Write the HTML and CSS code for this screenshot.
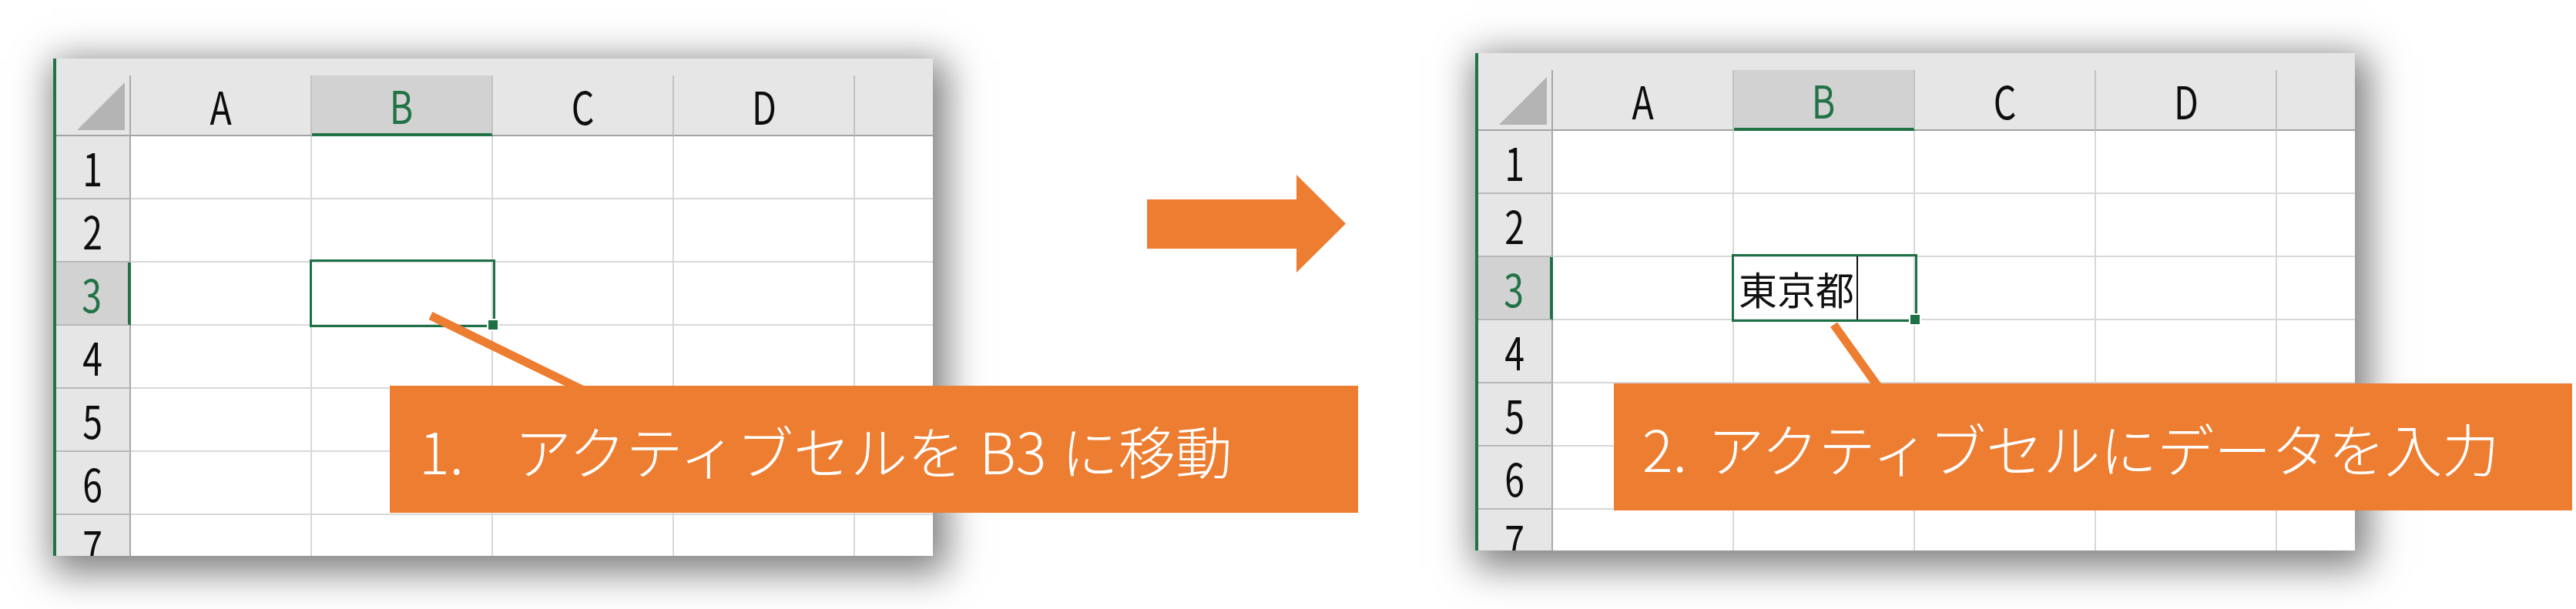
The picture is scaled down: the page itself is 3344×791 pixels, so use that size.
FILE: index.html
```html
<!DOCTYPE html>
<html lang="ja">
<head>
<meta charset="utf-8">
<title>アクティブセルにデータを入力</title>
<link rel="stylesheet" href="styles.css">
</head>
<body>
<div class="slide">
  <section class="panel panel-one">
    <div class="sheet">
      <div class="edge"></div>
      <div class="grid">
        <div class="strip"></div>
        <div class="corner"><span class="tri"></span></div>
        <div class="ch"><span>A</span></div>
        <div class="ch ch-sel"><span>B</span></div>
        <div class="ch"><span>C</span></div>
        <div class="ch"><span>D</span></div>
        <div class="ch ch-last"></div>

        <div class="rh"><span>1</span></div><div class="c"></div><div class="c"></div><div class="c"></div><div class="c"></div><div class="c c-last"></div>
        <div class="rh"><span>2</span></div><div class="c"></div><div class="c"></div><div class="c"></div><div class="c"></div><div class="c c-last"></div>
        <div class="rh rh-sel"><span>3</span></div><div class="c"></div><div class="c active"><div class="selection"><span class="handle"></span></div></div><div class="c"></div><div class="c"></div><div class="c c-last"></div>
        <div class="rh"><span>4</span></div><div class="c"></div><div class="c"></div><div class="c"></div><div class="c"></div><div class="c c-last"></div>
        <div class="rh"><span>5</span></div><div class="c"></div><div class="c"></div><div class="c"></div><div class="c"></div><div class="c c-last"></div>
        <div class="rh"><span>6</span></div><div class="c"></div><div class="c"></div><div class="c"></div><div class="c"></div><div class="c c-last"></div>
        <div class="rh rh-cut"><span>7</span></div><div class="c"></div><div class="c"></div><div class="c"></div><div class="c"></div><div class="c c-last"></div>
      </div>
    </div>
    <svg class="leader" width="1142" height="646" viewBox="0 0 1142 646">
      <line x1="490" y1="334" x2="736" y2="454" stroke="#ED7D31" stroke-width="11"/>
    </svg>
    <div class="callout callout-one"><span class="num">1.</span><span>アクティブセルを B3 に移動</span></div>
  </section>

  <svg class="arrow" width="258" height="127" viewBox="0 0 258 127">
    <polygon points="0,32 194,32 194,0 258,63.5 194,127 194,96 0,96" fill="#ED7D31"/>
  </svg>

  <section class="panel panel-two">
    <div class="sheet">
      <div class="edge"></div>
      <div class="grid">
        <div class="strip"></div>
        <div class="corner"><span class="tri"></span></div>
        <div class="ch"><span>A</span></div>
        <div class="ch ch-sel"><span>B</span></div>
        <div class="ch"><span>C</span></div>
        <div class="ch"><span>D</span></div>
        <div class="ch ch-last"></div>

        <div class="rh"><span>1</span></div><div class="c"></div><div class="c"></div><div class="c"></div><div class="c"></div><div class="c c-last"></div>
        <div class="rh"><span>2</span></div><div class="c"></div><div class="c"></div><div class="c"></div><div class="c"></div><div class="c c-last"></div>
        <div class="rh rh-sel"><span>3</span></div><div class="c"></div><div class="c active"><div class="selection editing"><span class="value">東京都</span><span class="caret"></span><span class="handle"></span></div></div><div class="c"></div><div class="c"></div><div class="c c-last"></div>
        <div class="rh"><span>4</span></div><div class="c"></div><div class="c"></div><div class="c"></div><div class="c"></div><div class="c c-last"></div>
        <div class="rh"><span>5</span></div><div class="c"></div><div class="c"></div><div class="c"></div><div class="c"></div><div class="c c-last"></div>
        <div class="rh"><span>6</span></div><div class="c"></div><div class="c"></div><div class="c"></div><div class="c"></div><div class="c c-last"></div>
        <div class="rh rh-cut"><span>7</span></div><div class="c"></div><div class="c"></div><div class="c"></div><div class="c"></div><div class="c c-last"></div>
      </div>
    </div>
    <svg class="leader" width="1142" height="646" viewBox="0 0 1142 646">
      <line x1="465.5" y1="352.6" x2="543" y2="461" stroke="#ED7D31" stroke-width="11"/>
    </svg>
    <div class="callout callout-two">2. アクティブセルにデータを入力</div>
  </section>
</div>
</body>
</html>
```

FILE: styles.css
```css
* { box-sizing: border-box; }

html, body {
  margin: 0;
  padding: 0;
  background: #ffffff;
}

body {
  width: 3344px;
  height: 791px;
  overflow: hidden;
  font-family: "Noto Sans CJK JP", "Noto Sans", sans-serif;
}

.slide {
  display: flex;
  align-items: flex-start;
  padding-left: 69px;
}

.panel {
  position: relative;
  width: 1142px;
  height: 646px;
  flex: none;
}

.panel-one { margin-top: 76px; }
.panel-two { margin-top: 69px; margin-left: 168px; }

.arrow {
  flex: none;
  margin-left: 278px;
  margin-top: 227px;
  display: block;
}

.sheet {
  display: flex;
  width: 1142px;
  height: 646px;
  overflow: hidden;
  background: #ffffff;
  box-shadow: 8px 12px 46px 10px rgba(0, 0, 0, 0.5);
}

.edge {
  width: 4px;
  flex: none;
  background: #217346;
}

.grid {
  flex: 1;
  display: grid;
  grid-template-columns: 97px repeat(4, 235px) 1fr;
  grid-template-rows: 22px 79px repeat(6, 82px) 1fr;
}

.strip {
  grid-column: 1 / -1;
  background: #e6e6e6;
}

.corner {
  position: relative;
  background: #e6e6e6;
  border-right: 2px solid #a9a9a9;
  border-bottom: 2px solid #a3a3a3;
}

.tri {
  position: absolute;
  right: 6px;
  bottom: 6px;
  width: 62px;
  height: 62px;
  background: #b4b4b4;
  clip-path: polygon(100% 0, 100% 100%, 0 100%);
}

.ch, .rh {
  display: flex;
  align-items: center;
  justify-content: center;
  background: #e6e6e6;
  color: #0d0d0d;
  font-size: 58px;
  font-weight: 400;
  line-height: 1;
}

.ch span, .rh span {
  display: inline-block;
  transform: scaleX(0.8);
}

.rh-cut { align-items: flex-start; padding-top: 10px; }

.ch {
  border-right: 2px solid #c2c2c2;
  border-bottom: 2px solid #a3a3a3;
}

.ch-last { border-right: 0; }

.ch-sel {
  background: #d2d2d2;
  color: #217346;
  border-bottom: 4px solid #217346;
}

.rh {
  border-right: 2px solid #a9a9a9;
  border-bottom: 2px solid #b8b8b8;
}

.rh-sel {
  background: #d2d2d2;
  color: #217346;
  border-right: 4px solid #217346;
}

.c {
  border-right: 2px solid #d8d8d8;
  border-bottom: 2px solid #d8d8d8;
}

.c-last { border-right: 0; }

.active { position: relative; }

.selection {
  position: absolute;
  top: -4px;
  left: -3px;
  right: -5px;
  bottom: -4px;
  border: 3px solid #1e7145;
  display: flex;
  align-items: center;
  z-index: 1;
}

.handle {
  position: absolute;
  right: -8px;
  bottom: -8px;
  width: 16px;
  height: 16px;
  background: #1e7145;
  border: 2px solid #ffffff;
}

.editing {
  padding-left: 6px;
}

.value {
  font-size: 50px;
  font-weight: 400;
  color: #111111;
  line-height: 1;
}

.caret {
  align-self: stretch;
  width: 2px;
  margin-left: 3px;
  background: #111111;
}

.leader {
  position: absolute;
  left: 0;
  top: 0;
  overflow: visible;
  z-index: 2;
}

.callout {
  position: absolute;
  z-index: 3;
  height: 165px;
  display: flex;
  align-items: center;
  background: #ED7D31;
  color: #ffffff;
  font-size: 74px;
  font-weight: 300;
  line-height: 1;
  white-space: pre;
  word-spacing: 10px;
}

.callout-one {
  left: 437px;
  top: 425px;
  width: 1257px;
  padding-left: 38px;
  word-spacing: 3px;
}

.num {
  margin-right: 66px;
}

.callout-two {
  left: 180px;
  top: 429px;
  width: 1244px;
  padding-left: 37px;
}
```
